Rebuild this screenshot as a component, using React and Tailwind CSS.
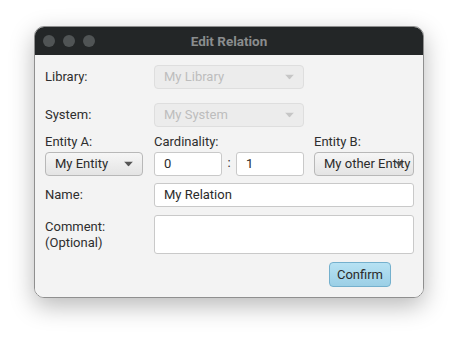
const FONT = "font-['Roboto','Liberation_Sans',sans-serif]";

function Arrow({ disabled }) {
	return (
		<svg width="9" height="5" viewBox="0 0 9 5" className="absolute right-[9px] top-1/2 -translate-y-1/2">
			<path d="M0 0 H9 L4.5 5 Z" fill={disabled ? "#c6c6c6" : "#555555"} />
		</svg>
	);
}

function Combo({ value, disabled, className = "" }) {
	return (
		<div
			className={`relative flex h-[24px] items-center overflow-hidden rounded-[4px] border pl-[9px] ${
				disabled
					? "border-[#dedede] bg-[#ececec] text-[#bdbdbd]"
					: "border-[#b8b8b8] bg-gradient-to-b from-[#f6f6f6] to-[#e4e4e4] text-[#2b2b2b]"
			} ${className}`}
		>
			<span className="whitespace-nowrap">{value}</span>
			<Arrow disabled={disabled} />
		</div>
	);
}

function Field({ value, className = "" }) {
	return (
		<div
			className={`flex h-[24px] items-center rounded-[3px] border border-[#c9c9c9] bg-white pl-[9px] text-[#2b2b2b] ${className}`}
		>
			{value}
		</div>
	);
}

export default function App() {
	return (
		<div className={`min-h-[341px] w-[458px] bg-white pl-[34px] pt-[26px] text-[13px] leading-[16px] ${FONT}`}>
			<div className="flex h-[272px] w-[390px] flex-col overflow-hidden rounded-[10px] border border-[#8f8f8f] shadow-[0_8px_24px_rgba(0,0,0,0.28)]">
				<div className="relative flex h-[28px] shrink-0 items-center justify-center bg-[#232627]">
					<div className="absolute left-[8px] top-1/2 flex -translate-y-1/2 gap-[8px]">
						<span className="h-[12px] w-[12px] rounded-full bg-[#505455]" />
						<span className="h-[12px] w-[12px] rounded-full bg-[#505455]" />
						<span className="h-[12px] w-[12px] rounded-full bg-[#505455]" />
					</div>
					<span className="text-[13.5px] font-bold text-[#8a8d8e]">Edit Relation</span>
				</div>

				<div className="flex flex-1 flex-col bg-[#f3f3f3] pl-[10px] pr-[9px] pt-[10px] text-[#2e2e2e]">
					<div className="flex h-[24px] items-center">
						<span className="w-[109px]">Library:</span>
						<Combo value="My Library" disabled className="w-[150px]" />
					</div>

					<div className="mt-[14px] flex h-[24px] items-center">
						<span className="w-[109px]">System:</span>
						<Combo value="My System" disabled className="w-[150px]" />
					</div>

					<div className="mt-[7px] flex items-end">
						<div className="flex w-[98px] flex-col gap-[2px]">
							<span>Entity A:</span>
							<Combo value="My Entity" />
						</div>
						<div className="ml-[11px] flex flex-col gap-[2px]">
							<span>Cardinality:</span>
							<div className="flex items-center">
								<Field value="0" className="w-[68px]" />
								<span className="w-[14px] pb-[3px] text-center">:</span>
								<Field value="1" className="w-[68px]" />
							</div>
						</div>
						<div className="ml-[10px] flex w-[100px] flex-col gap-[2px]">
							<span>Entity B:</span>
							<Combo value="My other Entity" />
						</div>
					</div>

					<div className="mt-[7px] flex h-[24px] items-center">
						<span className="w-[109px]">Name:</span>
						<Field value="My Relation" className="flex-1" />
					</div>

					<div className="mt-[8px] flex">
						<span className="w-[109px] pt-[4px]">
							Comment:
							<br />
							(Optional)
						</span>
						<div className="h-[39px] flex-1 rounded-[3px] border border-[#c9c9c9] bg-white" />
					</div>

					<div className="mt-[8px] flex justify-end pr-[23px]">
						<button
							type="button"
							className="h-[25px] w-[62px] rounded-[4px] border border-[#74b0cd] bg-gradient-to-b from-[#b7e2f3] to-[#9bcfe6] text-[#2b2b2b]"
						>
							Confirm
						</button>
					</div>
				</div>
			</div>
		</div>
	);
}
